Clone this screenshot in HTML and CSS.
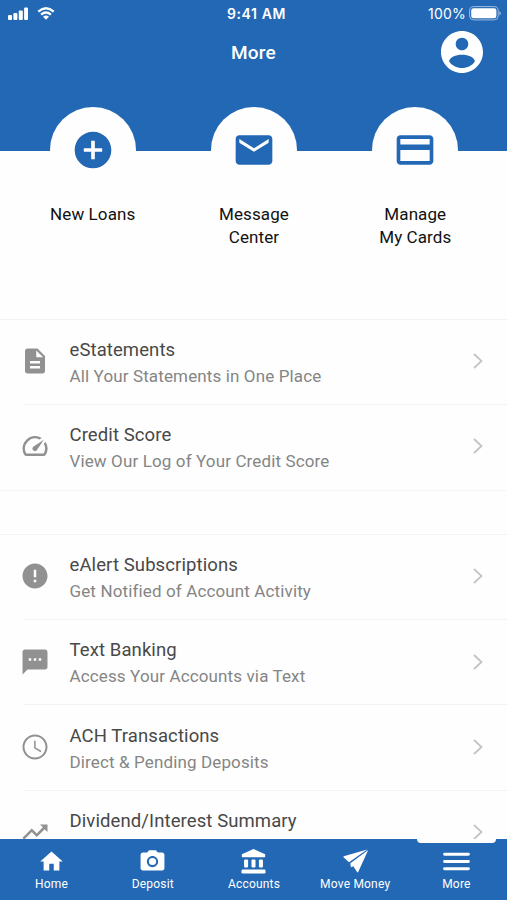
FILE: index.html
```
<!DOCTYPE html>
<html lang="en">
<head>
    <meta charset="UTF-8">
    <meta name="viewport" content="width=device-width, initial-scale=1.0">
    <title>More</title>
    <link rel="stylesheet" href="styles.css">
</head>
<body>

<header>
    <div class="status-bar">
        <div class="status-left">
            <svg width="20" height="13" viewBox="0 0 20 13"><rect x="0" y="8" width="4" height="5" rx="1"/><rect x="5.4" y="6" width="4" height="7" rx="1"/><rect x="10.8" y="3.4" width="4" height="9.6" rx="1"/><rect x="16.1" y="0.5" width="3.9" height="12.5" rx="1"/></svg>
            <svg class="wifi" width="18" height="13" viewBox="0 0 18 13"><path d="M1.3 4.6Q9-2 16.7 4.6M4.1 7.6Q9 3.4 13.9 7.6" fill="none" stroke="#fff" stroke-width="2.3"/><path d="M6 9.7Q9 7.5 12 9.7L9 12.7z"/></svg>
        </div>
        <div class="status-time">9:41 AM</div>
        <div class="status-right">
            <span>100%</span>
            <svg width="32" height="15" viewBox="0 0 32 15"><rect x="0.6" y="0.6" width="28.6" height="13.3" rx="4" fill="none" stroke="#9dbbe0" stroke-width="1"/><rect x="2.2" y="2.3" width="25.2" height="9.9" rx="2.3"/><path d="M30.3 5q1.5.8 1.5 2.3t-1.5 2.3z" fill="#9dbbe0"/></svg>
        </div>
    </div>
    <div class="title-bar">
        <h1>More</h1>
        <svg class="profile" viewBox="2 2 20 20"><path d="M12 2C6.48 2 2 6.48 2 12s4.48 10 10 10 10-4.48 10-10S17.52 2 12 2zm0 3.2c1.66 0 3 1.34 3 3s-1.34 3-3 3-3-1.34-3-3 1.34-3 3-3zm0 14.4c-2.6 0-4.9-1.2-6.1-3.1 0-2 3.2-3.2 6.1-3.2s6.1 1.2 6.1 3.2c-1.2 1.9-3.5 3.1-6.1 3.1z"/></svg>
    </div>
</header>

<!-- Quick actions -->
<div class="actions">
    <div class="action">
        <div class="circle">
            <svg viewBox="0 0 24 24"><path d="M12 2C6.48 2 2 6.48 2 12s4.48 10 10 10 10-4.48 10-10S17.52 2 12 2zm5 11h-4v4h-2v-4H7v-2h4V7h2v4h4v2z"/></svg>
        </div>
        <p>New Loans</p>
    </div>
    <div class="action">
        <div class="circle">
            <svg viewBox="0 0 24 24"><path d="M20 4H4c-1.1 0-1.99.9-1.99 2L2 18c0 1.1.9 2 2 2h16c1.1 0 2-.9 2-2V6c0-1.1-.9-2-2-2zm0 4l-8 5-8-5V6l8 5 8-5v2z"/></svg>
        </div>
        <p>Message<br>Center</p>
    </div>
    <div class="action">
        <div class="circle">
            <svg viewBox="0 0 24 24"><path d="M20 4H4c-1.11 0-1.99.89-1.99 2L2 18c0 1.11.89 2 2 2h16c1.11 0 2-.89 2-2V6c0-1.11-.89-2-2-2zm0 14H4v-6h16v6zm0-9H4V6h16v3z"/></svg>
        </div>
        <p>Manage<br>My Cards</p>
    </div>
</div>

<!-- Menu -->
<main>
    <ul class="menu">
        <li>
            <svg class="icon" viewBox="0 0 24 24"><path d="M14 2H6c-1.1 0-1.99.9-1.99 2L4 20c0 1.1.89 2 1.99 2H18c1.1 0 2-.9 2-2V8l-6-6zm2 16H8v-2h8v2zm0-4H8v-2h8v2zm-3-5V3.5L18.5 9H13z"/></svg>
            <div class="text"><h2>eStatements</h2><p>All Your Statements in One Place</p></div>
            <svg class="chevron" viewBox="0 0 10 16"><path d="M1 1l7.5 7L1 15"/></svg>
        </li>
        <li>
            <svg class="icon" viewBox="0 0 24 24"><path d="M20.38 8.57l-1.23 1.85a8 8 0 0 1-.22 7.58H5.07A8 8 0 0 1 15.58 6.85l1.85-1.23A10 10 0 0 0 3.35 19a2 2 0 0 0 1.72 1h13.85a2 2 0 0 0 1.74-1 10 10 0 0 0-.27-10.44zm-9.79 6.84a2 2 0 0 0 2.83 0l5.66-8.49-8.49 5.66a2 2 0 0 0 0 2.83z"/></svg>
            <div class="text"><h2>Credit Score</h2><p>View Our Log of Your Credit Score</p></div>
            <svg class="chevron" viewBox="0 0 10 16"><path d="M1 1l7.5 7L1 15"/></svg>
        </li>
    </ul>
    <ul class="menu">
        <li>
            <svg class="icon" viewBox="0 0 24 24"><path d="M12 2C6.48 2 2 6.48 2 12s4.48 10 10 10 10-4.48 10-10S17.52 2 12 2zm1 15h-2v-2h2v2zm0-4h-2V7h2v6z"/></svg>
            <div class="text"><h2>eAlert Subscriptions</h2><p>Get Notified of Account Activity</p></div>
            <svg class="chevron" viewBox="0 0 10 16"><path d="M1 1l7.5 7L1 15"/></svg>
        </li>
        <li>
            <svg class="icon" viewBox="0 0 24 24"><path d="M20 2H4c-1.1 0-1.99.9-1.99 2L2 22l4-4h14c1.1 0 2-.9 2-2V4c0-1.1-.9-2-2-2zM9 11H7V9h2v2zm4 0h-2V9h2v2zm4 0h-2V9h2v2z"/></svg>
            <div class="text"><h2>Text Banking</h2><p>Access Your Accounts via Text</p></div>
            <svg class="chevron" viewBox="0 0 10 16"><path d="M1 1l7.5 7L1 15"/></svg>
        </li>
        <li>
            <svg class="icon" viewBox="0 0 24 24"><path d="M11.99 2C6.47 2 2 6.48 2 12s4.47 10 9.99 10C17.52 22 22 17.52 22 12S17.52 2 11.99 2zM12 20.4c-4.64 0-8.4-3.76-8.4-8.4s3.76-8.4 8.4-8.4 8.4 3.76 8.4 8.4-3.76 8.4-8.4 8.4zM12.5 7H11.3v6l5.1 3.1.7-1.1-4.6-2.7z"/></svg>
            <div class="text"><h2>ACH Transactions</h2><p>Direct &amp; Pending Deposits</p></div>
            <svg class="chevron" viewBox="0 0 10 16"><path d="M1 1l7.5 7L1 15"/></svg>
        </li>
        <li>
            <svg class="icon" viewBox="0 0 24 24"><path d="M16 6l2.29 2.29-4.88 4.88-4-4L2 16.59 3.41 18l6-6 4 4 6.3-6.29L22 12V6z"/></svg>
            <div class="text"><h2>Dividend/Interest Summary</h2></div>
            <svg class="chevron" viewBox="0 0 10 16"><path d="M1 1l7.5 7L1 15"/></svg>
        </li>
    </ul>
</main>

<nav>
    <a>
        <svg viewBox="0 0 24 24"><path d="M10 20v-6h4v6h5v-8h3L12 3 2 12h3v8z"/></svg>
        <span>Home</span>
    </a>
    <a>
        <svg viewBox="0 0 24 24"><path d="M9 2L7.17 4H3.4c-1.1 0-2 .9-2 2v12c0 1.1.9 2 2 2h17.2c1.1 0 2-.9 2-2V6c0-1.1-.9-2-2-2h-3.77L15 2H9zm3 15c-2.76 0-5-2.24-5-5s2.24-5 5-5 5 2.24 5 5-2.24 5-5 5z"/><circle cx="12" cy="12" r="3.2"/></svg>
        <span>Deposit</span>
    </a>
    <a>
        <svg viewBox="0 0 24 24"><path d="M12 .8L1.6 5.6v1.9q0 .7.7.7h19.4q.7 0 .7-.7V5.6z"/><rect x="3.6" y="10.2" width="3.6" height="7.2" rx="1"/><rect x="10.2" y="10.2" width="3.6" height="7.2" rx="1"/><rect x="16.8" y="10.2" width="3.6" height="7.2" rx="1"/><rect x="1.3" y="19.2" width="21.4" height="3.5" rx="1.2"/></svg>
        <span>Accounts</span>
    </a>
    <a>
        <svg viewBox="0 0 24 24"><path d="M22.4 1.4L1.6 7.3q-.8.3-.2.9l4.8 4.4z"/><path d="M23.3 1.8L7.4 13.6l.5 3.4 2.2-.7 3.3 5q.6.9 1.1-.1z"/></svg>
        <span>Move Money</span>
    </a>
    <a class="active">
        <svg viewBox="0 0 26 24"><path d="M1.5 5h23M1.5 12h23M1.5 19h23" stroke="#fff" stroke-width="2.8" stroke-linecap="round"/></svg>
        <span>More</span>
    </a>
</nav>

</body>
</html>
```
FILE: styles.css
```
* { box-sizing: border-box; margin: 0; padding: 0; }
body { display: flex; flex-direction: column; height: 900px; overflow: hidden; font-family: Roboto, sans-serif; background: #fefefe; color: #111; }
header { flex: none; height: 151px; background: #2368b4; color: white; fill: white; }
.status-bar { display: grid; grid-template-columns: 1fr auto 1fr; align-items: center; height: 27px; padding: 0 6px 0 10px; font-family: Inter, sans-serif; font-size: 14px; }
.status-left { display: flex; gap: 9px; margin-left: -2px; }
.status-time { padding-left: 2px; font-weight: 600; letter-spacing: 0.6px; }
.status-right { display: flex; justify-content: flex-end; align-items: center; gap: 3px; letter-spacing: 0.2px; }
.title-bar { display: grid; grid-template-columns: 1fr auto 1fr; align-items: center; height: 50px; padding-right: 24px; padding-left: 24px; }
.title-bar h1 { grid-column: 2; font-size: 19px; font-weight: 500; letter-spacing: 0.2px; }
.profile { width: 42px; height: 42px; justify-self: end; }
.actions { flex: none; display: grid; grid-template-columns: repeat(3, 161.3px); justify-content: center; height: 212px; margin-top: -44px; padding-left: 1px; text-align: center; }
.circle { display: flex; align-items: center; justify-content: center; width: 86px; height: 86px; margin: 0 auto 10px; border-radius: 50%; background: #fefefe; }
.circle svg { width: 44px; height: 44px; fill: #2368b4; }
.action p { font-size: 17px; line-height: 22.5px; letter-spacing: 0.1px; }
main { flex: 1; min-height: 0; overflow: hidden; }
.menu { list-style: none; margin-bottom: 43px; border-top: 1px solid #f2f2f2; border-bottom: 1px solid #f6f6f6; }
.menu li { position: relative; display: flex; align-items: center; height: 85.5px; padding: 0 24px 3px 20px; }
.menu li:last-child { height: 84.5px; }
.menu li + li::before { content: ""; position: absolute; top: -2px; left: 24px; right: 0; height: 1px; background: #f2f2f2; }
.icon { width: 30px; height: 30px; margin-right: 19.5px; fill: #919191; }
.text { flex: 1; height: 49px; }
.text h2 { font-size: 18.5px; line-height: 26px; font-weight: 400; letter-spacing: 0.1px; color: #484848; }
.text p { font-size: 17px; line-height: 26px; letter-spacing: 0.13px; color: #858585; }
.chevron { width: 10px; height: 16px; fill: none; stroke: #c4c4c4; stroke-width: 1.8; }
nav { flex: none; display: grid; grid-template-columns: repeat(5, 1fr); height: 61px; padding-left: 1px; background: #2368b4; color: white; fill: white; }
nav a { position: relative; display: flex; flex-direction: column; align-items: center; padding-top: 9px; font-size: 12px; line-height: 16px; letter-spacing: 0.2px; }
nav svg { width: 27px; height: 27px; margin-bottom: 1px; }
nav .active::before { content: ""; position: absolute; top: 0; width: 79px; height: 4px; border-radius: 0 0 4px 4px; background: #fefefe; }
```
